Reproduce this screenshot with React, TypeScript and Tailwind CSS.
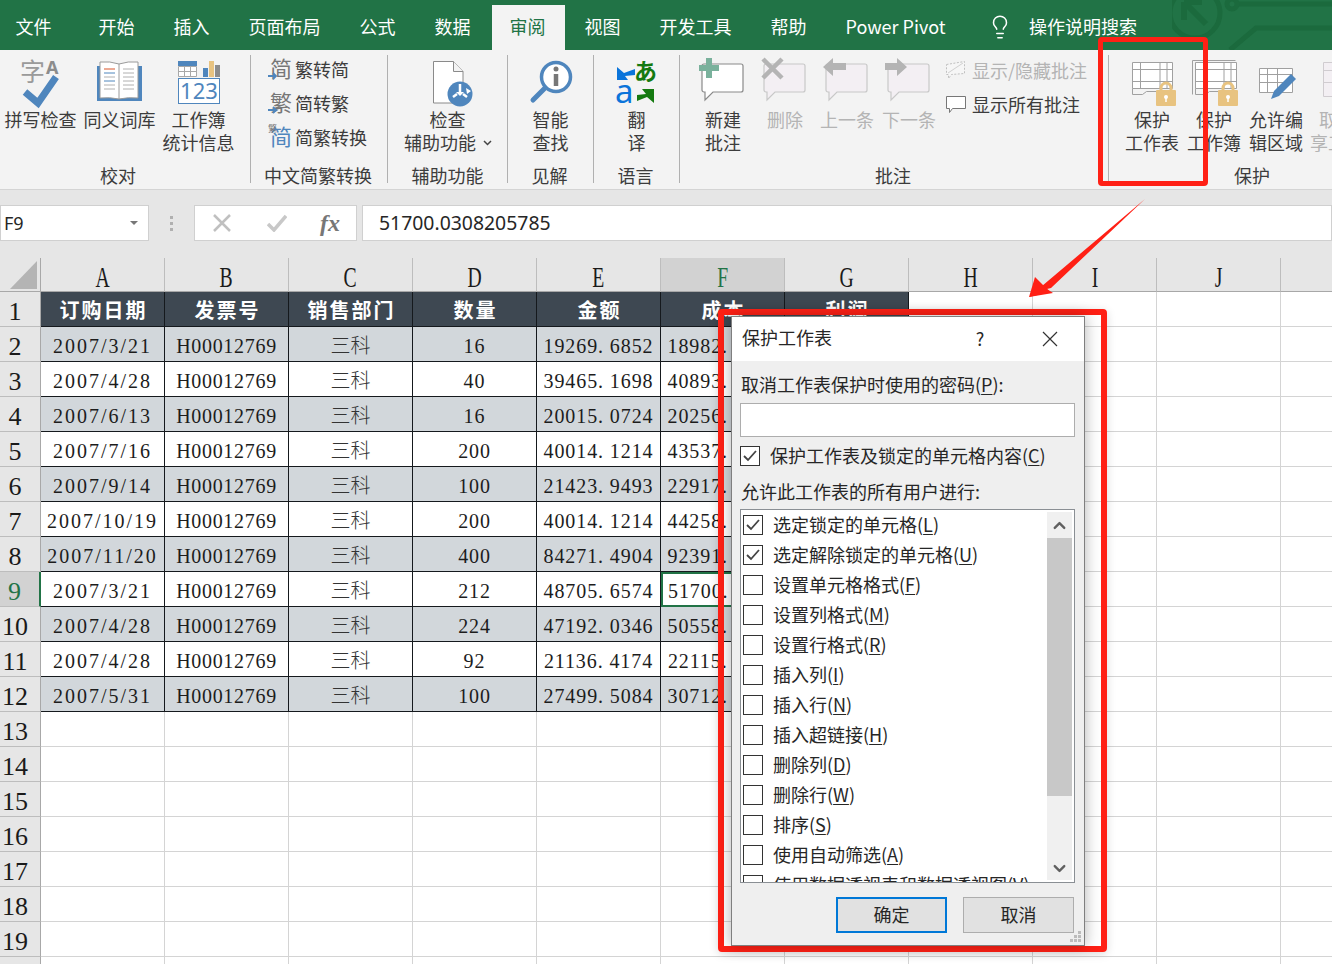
import React from 'react';
import { Lightbulb, ChevronUp, ChevronDown } from 'lucide-react';

const CJK = '[font-family:"Noto_Sans_CJK_SC","Noto_Sans",sans-serif]';

const tabs = ['文件', '开始', '插入', '页面布局', '公式', '数据', '审阅', '视图', '开发工具', '帮助', 'Power Pivot'];

const BLUE = '#4f86bd';

const Bubble = ({ x = 5, disabled = false }: { x?: number; disabled?: boolean }) => (
  <path
    d={`M${x + 2} 9h37a2 2 0 0 1 2 2v24a2 2 0 0 1-2 2h-28l-8 8v-8h-1a2 2 0 0 1-2-2v-24a2 2 0 0 1 2-2z`}
    fill={disabled ? '#f3eff3' : '#fff'}
    stroke={disabled ? '#c8c8c8' : '#8a8a8a'}
    strokeWidth="1.2"
  />
);

const Ico = ({ children }: { children: React.ReactNode }) => (
  <svg width="52" height="53" viewBox="0 0 52 53" className="shrink-0 overflow-visible">
    {children}
  </svg>
);

const SpellIcon = () => (
  <Ico>
    <text x="5" y="26" fontSize="25" fill="#9a9a9a" fontFamily="Noto Sans CJK SC">字</text>
    <text x="31" y="19" fontSize="18" fill="#8c8c8c" fontWeight="700" fontFamily="Noto Sans">A</text>
    <path d="M10 37l13 11 18-26" fill="none" stroke={BLUE} strokeWidth="7" />
  </Ico>
);

const BookIcon = () => (
  <Ico>
    <path d="M3 11h45v35H3z" fill={BLUE} />
    <path d="M6 7q10-1 19 2q9-3 19-2v36q-10-1-19 1q-9-2-19-1z" fill="#fff" stroke="#9a9a9a" />
    <path d="M25 9v35" stroke="#9a9a9a" />
    <path d="M10 14h11" stroke="#d9542b" />
    <path d="M10 18h11M10 26h11" stroke="#4f86bd" />
    <path d="M10 22h11M10 30h11M10 34h11M29 14h11M29 18h11M29 22h11M29 26h11M29 30h11M29 34h11" stroke="#b0b0b0" />
  </Ico>
);

const StatsIcon = () => (
  <Ico>
    <path d="M5 6h19v5H5z" fill={BLUE} />
    <path d="M5.5 11.5h18v10h-18zM5.5 16.5h18M11.5 11.5v10M17.5 11.5v10" fill="#fff" stroke="#a8a8a8" />
    <path d="M30 13h5v9h-5z" fill={BLUE} />
    <path d="M36 6h5v16h-5z" fill="#e8c380" />
    <path d="M42 10h5v12h-5z" fill="#8c8c8c" />
    <rect x="5.5" y="23.5" width="41" height="25" fill="#fff" stroke={BLUE} />
    <text x="26" y="44" textAnchor="middle" fontSize="22" fill={BLUE} fontFamily="Noto Sans">123</text>
  </Ico>
);

const DocIcon = () => (
  <Ico>
    <path d="M11.5 6.500h20l9.500 10v31.500h-29.500z" fill="#fff" stroke="#8a8a8a" />
    <path d="M31.500 6.500v10h9.500" fill="#f3f3f3" stroke="#8a8a8a" />
    <circle cx="38" cy="39" r="12.500" fill={BLUE} />
    <path d="M38 29v9m-7 4l4-3m6 0l4 3" stroke="#fff" strokeWidth="2.500" />
    <path d="M38 41l-4-4h8zM44 33l5 3-4 3z" fill="#fff" />
  </Ico>
);

const LookupIcon = () => (
  <Ico>
    <circle cx="31" cy="22" r="14.500" fill="#fff" stroke={BLUE} strokeWidth="3.500" />
    <path d="M20 33L8 45" stroke={BLUE} strokeWidth="5" strokeLinecap="round" />
    <circle cx="31" cy="14" r="2.500" fill="#777" />
    <path d="M31 19v12" stroke="#777" strokeWidth="4.500" />
  </Ico>
);

const TranslateIcon = () => (
  <Ico>
    <path d="M6 12l7 6 11-4v6l-10 1 3 4H6z" fill="#0a74da" />
    <text x="4" y="48" fontSize="33" fill="#0a74da" fontFamily="Noto Sans">a</text>
    <text x="23" y="25" fontSize="23" fontWeight="700" fill="#157a10" fontFamily="Noto Sans CJK SC">あ</text>
    <path d="M43 34v14l-7-6-10 4v-6l9-1-4-5z" fill="#157a10" />
  </Ico>
);

const NewCommentIcon = () => (
  <Ico>
    <Bubble />
    <path d="M9 3h6v7h7v6h-7v7H9v-7H2v-6h7z" fill="#7ab19c" />
  </Ico>
);

const DeleteIcon = () => (
  <Ico>
    <Bubble disabled />
    <path d="M4 4l19 19M23 4L4 23" stroke="#b4b4b4" strokeWidth="4.500" />
  </Ico>
);

const PrevIcon = () => (
  <Ico>
    <Bubble disabled />
    <path d="M2 12L12 3v5h13v7H12v6z" fill="#b4b4b4" />
  </Ico>
);

const NextIcon = () => (
  <Ico>
    <Bubble disabled />
    <path d="M24 12L14 3v5H2v7h12v6z" fill="#b4b4b4" />
  </Ico>
);

const Lock = ({ x }: { x: number }) => (
  <g>
    <path d={`M${x + 5} 36v-3a5 5 0 0 1 10 0v3`} fill="none" stroke="#e8c380" strokeWidth="3" />
    <rect x={x} y="35" width="20" height="16" rx="1" fill="#e8c380" />
    <circle cx={x + 10} cy="42" r="2" fill="#fff" />
    <path d={`M${x + 10} 42v5`} stroke="#fff" strokeWidth="1.500" />
  </g>
);

const SheetGrid = ({ x, w, stroke = '#a0a0a0' }: { x: number; w: number; stroke?: string }) => (
  <g fill="none" stroke={stroke}>
    <path d={`M${x + 0.5} 7.500h${w}v26h-${w}z`} fill="#fff" />
    <path d={`M${x + 0.5} 14.500h${w}M${x + 0.5} 26.500h${w}M${x + 8.500} 7.500v26M${x + w - 12} 7.500v26M${x + w - 5} 7.500v26`} />
    <path d={`M${x + 0.5} 33.500v6h10l4-3h10`} />
  </g>
);

const ProtectSheetIcon = () => (
  <Ico>
    <SheetGrid x={6} w={40} />
    <Lock x={30} />
  </Ico>
);

const ProtectBookIcon = () => (
  <Ico>
    <path d="M4.500 5.500h43" stroke="#a0a0a0" />
    <path d="M4.500 5.500v34" stroke="#a0a0a0" />
    <SheetGrid x={7} w={41} />
    <Lock x={30} />
  </Ico>
);

const AllowEditIcon = () => (
  <Ico>
    <g fill="#fff" stroke="#a0a0a0">
      <path d="M9.500 13.500h33v24h-33z" />
      <path d="M9.500 19.500h33M9.500 27.500h33M17.500 13.500v24M27.500 13.500v24" fill="none" />
    </g>
    <path d="M21 44l3-8 17-17 5 5-17 17z" fill={BLUE} />
  </Ico>
);

const UnshareIcon = () => (
  <Ico>
    <g fill="#f3eff3" stroke="#d0ccd0">
      <path d="M3.500 7.500h33v34h-33z" />
      <path d="M3.500 15.500h33M3.500 27.500h33M12.500 7.500v34" fill="none" />
    </g>
  </Ico>
);

const BigBtn = ({ icon, lines, w = 'w-[79px]', disabled = false }: { icon: React.ReactNode; lines: React.ReactNode[]; w?: string; disabled?: boolean }) => (
  <div className={`${w} shrink-0 flex flex-col items-center`}>
    {icon}
    <div className={`text-[18px] leading-[23px] text-center whitespace-nowrap ${disabled ? 'text-[#b4b4b4]' : 'text-[#3c3c3c]'}`}>
      {lines.map((l, i) => (
        <div key={i}>{l}</div>
      ))}
    </div>
  </div>
);

const Group = ({ w, label, children, className = '', last = false, labelPad = 'pr-[2px]' }: { w: string; label: string; children: React.ReactNode; className?: string; last?: boolean; labelPad?: string }) => (
  <div className={`${w} shrink-0 h-[128px] flex flex-col ${last ? '' : 'border-r border-[#b0b0b0]'}`}>
    <div className={`h-[110px] flex ${className}`}>{children}</div>
    <div className={`h-[18px] leading-[20px] text-[18px] text-center text-[#3c3c3c] whitespace-nowrap ${labelPad}`}>{label}</div>
  </div>
);

const SmallConv = ({ glyph, label, blue = false, arrow = true }: { glyph: string; label: string; blue?: boolean; arrow?: boolean }) => (
  <div className="h-[34px] flex items-center">
    <svg width="26" height="26" viewBox="0 0 26 26" className="shrink-0 overflow-visible">
      <text x="3" y="21" fontSize="22" fill={blue ? BLUE : '#777'} fontFamily="Noto Sans CJK SC">{glyph}</text>
      {!arrow && <text x="1" y="8" fontSize="9" fill="#777" fontFamily="Noto Sans CJK SC">繁</text>}
      {arrow && <path d="M1 20h8m-3-3l3 3-3 3" fill="none" stroke={BLUE} strokeWidth="1.800" />}
    </svg>
    <span className="ml-[2px] text-[18px] leading-[23px] text-[#3c3c3c] whitespace-nowrap">{label}</span>
  </div>
);

const columns = ['A', 'B', 'C', 'D', 'E', 'F', 'G', 'H', 'I', 'J', '', ''];
const headers = ['订购日期', '发票号', '销售部门', '数量', '金额', '成本', '利润'];
const rows: string[][] = [
  ['2007/3/21', 'H00012769', '三科', '16', '19269. 6852', '18982. 3366'],
  ['2007/4/28', 'H00012769', '三科', '40', '39465. 1698', '40893. 2162'],
  ['2007/6/13', 'H00012769', '三科', '16', '20015. 0724', '20256. 4908'],
  ['2007/7/16', 'H00012769', '三科', '200', '40014. 1214', '43537. 9154'],
  ['2007/9/14', 'H00012769', '三科', '100', '21423. 9493', '22917. 3820'],
  ['2007/10/19', 'H00012769', '三科', '200', '40014. 1214', '44258. 3150'],
  ['2007/11/20', 'H00012769', '三科', '400', '84271. 4904', '92391. 2780'],
  ['2007/3/21', 'H00012769', '三科', '212', '48705. 6574', '51700. 0308'],
  ['2007/4/28', 'H00012769', '三科', '224', '47192. 0346', '50558. 4480'],
  ['2007/4/28', 'H00012769', '三科', '92', '21136. 4174', '22115. 7626'],
  ['2007/5/31', 'H00012769', '三科', '100', '27499. 5084', '30712. 6440'],
];

const rowNums = Array.from({ length: 20 }, (_, i) => i + 1);

const cellText = (c: number) => {
  if (c === 0) return 'tracking-[2px]';
  if (c === 1) return 'tracking-[0.7px]';
  if (c === 2) return 'font-light tracking-[0px] text-[#333]';
  return 'tracking-[0.9px]';
};

const Sheet = () => (
  <div className="grid grid-cols-[41px_repeat(12,124px)] grid-rows-[34px] auto-rows-[35px] [font-family:'Liberation_Serif','Noto_Sans_CJK_SC',serif]">
    <div className="bg-[#e6e6e6] border-r border-b border-[#a8a8a8] relative">
      <div className="absolute left-[10px] top-[3px] w-0 h-0 border-l-[27px] border-l-transparent border-b-[28px] border-b-[#b4b4b4]" />
    </div>
    {columns.map((c, i) => (
      <div
        key={i}
        className={`flex items-center justify-center pt-[4px] border-r border-b border-b-[#a8a8a8] border-r-[#bdbdbd] text-[24px] ${c === 'F' ? 'bg-[#d2d2d2] text-[#217346]' : 'bg-[#e6e6e6] text-[#1a1a1a]'}`}
      >
        <span className="scale-x-[0.82] scale-y-[1.2]">{c}</span>
      </div>
    ))}
    {rowNums.map((n) => {
      const isHead = n === 1;
      const data = rows[n - 2];
      return (
        <React.Fragment key={n}>
          <div
            className={`flex items-center justify-center pr-[10px] pt-[5px] text-[26px] border-b border-b-[#bdbdbd] ${n === 9 ? 'bg-[#d2d2d2] text-[#217346] border-r-2 border-r-[#217346]' : 'bg-[#e6e6e6] text-[#1a1a1a] border-r border-r-[#a8a8a8]'}`}
          >
            {n < 20 ? n : ''}
          </div>
          {columns.map((_, c) => {
            if (c < 7 && isHead) {
              return (
                <div key={c} className="bg-[#3e4852] border-r border-b border-[#15191d] flex items-center justify-center pl-[2px] pt-[3px] text-white font-bold text-[20px] tracking-[2px]">
                  {headers[c]}
                </div>
              );
            }
            if (c < 7 && data) {
              const band = n % 2 === 0 ? 'bg-[#d2d7db]' : 'bg-white';
              const selected = n === 9 && c === 5;
              return (
                <div
                  key={c}
                  className={`${band} ${cellText(c)} overflow-hidden whitespace-nowrap flex items-center justify-center pt-[3px] text-[20px] text-[#1c1c1c] ${selected ? 'border-2 border-[#217346]' : 'border-r border-b border-[#15191d]'}`}
                >
                  {data[c] ?? ''}
                </div>
              );
            }
            return <div key={c} className="bg-white border-r border-b border-[#d4d4d4]" />;
          })}
        </React.Fragment>
      );
    })}
  </div>
);

const Check = ({ checked = false }: { checked?: boolean }) => (
  <span className="w-[20px] h-[20px] shrink-0 border border-[#333] bg-white flex items-center justify-center">
    {checked && (
      <svg width="14" height="12" viewBox="0 0 14 12">
        <path d="M1 6l4 4 8-9" fill="none" stroke="#444" strokeWidth="1.800" />
      </svg>
    )}
  </span>
);

const Mn = ({ text, k, tail = '' }: { text: string; k: string; tail?: string }) => (
  <span className="-translate-y-[1px]">
    {text}(<span className="underline underline-offset-2">{k}</span>){tail}
  </span>
);

const permissions: [string, string, boolean][] = [
  ['选定锁定的单元格', 'L', true],
  ['选定解除锁定的单元格', 'U', true],
  ['设置单元格格式', 'F', false],
  ['设置列格式', 'M', false],
  ['设置行格式', 'R', false],
  ['插入列', 'I', false],
  ['插入行', 'N', false],
  ['插入超链接', 'H', false],
  ['删除列', 'D', false],
  ['删除行', 'W', false],
  ['排序', 'S', false],
  ['使用自动筛选', 'A', false],
  ['使用数据透视表和数据透视图', 'V', false],
];

const Dialog = () => (
  <div className="absolute left-[731px] top-[316px] w-[354px] h-[630px] border border-[#7f7f7f] bg-[#efefef] flex flex-col text-[18px] text-[#262626] shadow-[0_0_14px_rgba(0,0,0,0.3)]">
    <div className="h-[44px] shrink-0 bg-white flex items-center pl-[10px]">
      <span className="leading-[23px] -translate-y-[2px]">保护工作表</span>
      <span className="ml-[143px] w-[10px] text-center -translate-y-[1px]">?</span>
      <svg width="18" height="18" viewBox="0 0 18 18" className="ml-[56px]">
        <path d="M2 2l14 14M16 2L2 16" stroke="#333" strokeWidth="1.200" />
      </svg>
    </div>
    <div className="flex-1 min-h-0 flex flex-col pl-[8px] pr-[9px]">
      <div className="mt-[12px] h-[23px] leading-[23px] pl-[1px] whitespace-nowrap">
        <Mn text="取消工作表保护时使用的密码" k="P" tail=":" />
      </div>
      <div className="mt-[7px] h-[34px] shrink-0 bg-white border border-[#adadad]" />
      <div className="mt-[9px] h-[20px] flex items-center gap-[10px] whitespace-nowrap">
        <Check checked />
        <Mn text="保护工作表及锁定的单元格内容" k="C" />
      </div>
      <div className="mt-[14px] h-[23px] leading-[23px] pl-[1px] whitespace-nowrap">允许此工作表的所有用户进行:</div>
      <div className="mt-[6px] h-[374px] shrink-0 bg-white border border-[#8a8f94] flex overflow-hidden">
        <div className="flex-1 min-w-0 overflow-hidden pl-[2px]">
          {permissions.map(([t, k, on]) => (
            <div key={k} className="h-[30px] flex items-center gap-[10px] whitespace-nowrap">
              <Check checked={on} />
              <Mn text={t} k={k} />
            </div>
          ))}
        </div>
        <div className="w-[25px] my-[2px] mr-[2px] shrink-0 bg-[#f0f0f0] flex flex-col">
          <div className="h-[26px] shrink-0 flex items-center justify-center">
            <ChevronUp size={19} strokeWidth={3} color="#606060" />
          </div>
          <div className="h-[258px] shrink-0 bg-[#c8c8c8]" />
          <div className="flex-1 flex items-end justify-center pb-[2px]">
            <ChevronDown size={19} strokeWidth={3} color="#606060" />
          </div>
        </div>
      </div>
      <div className="mt-[14px] flex justify-end gap-[16px] pr-[1px]">
        <button className="w-[111px] h-[36px] pb-[2px] bg-[#e1e1e1] border-2 border-[#0078d7] text-[18px] leading-[23px] text-[#262626]">确定</button>
        <button className="w-[111px] h-[36px] pb-[2px] bg-[#e1e1e1] border border-[#adadad] text-[18px] leading-[23px] text-[#262626]">取消</button>
      </div>
    </div>
    <svg width="14" height="14" viewBox="0 0 14 14" className="absolute right-[1px] bottom-[1px]">
      <path d="M9 1h3v3H9zM5 5h3v3H5zM9 5h3v3H9zM1 9h3v3H1zM5 9h3v3H5zM9 9h3v3H9z" fill="#bcbcbc" />
    </svg>
  </div>
);

const tabClass = (t: string) => {
  if (t === '审阅') return 'ml-[1.500px] pl-[18px] pr-[19.500px] bg-[#f3f3f3] text-[#217346]';
  if (t === '文件') return 'pl-[19.500px] pr-[27.500px] text-white';
  return 'px-[19.500px] text-white';
};

export default function App() {
  return (
    <div className={`relative w-[1332px] h-[964px] overflow-hidden bg-[#e6e6e6] ${CJK}`}>
      {/* tabs */}
      <div className="relative h-[50px] bg-[#217346] overflow-hidden flex items-end">
        <svg width="160" height="50" viewBox="0 0 160 50" className="absolute right-0 top-0" fill="none" stroke="#1b6a3d" strokeWidth="5">
          <circle cx="23" cy="13" r="25" />
          <path d="M12 2h18M12 2v18M12 2l22 22" strokeWidth="6" />
          <path d="M58 50l26-22h76M65 4h95" />
          <circle cx="60" cy="4" r="5" />
        </svg>
        <div className="relative flex -ml-[4px]">
          {tabs.map((t) => (
            <div key={t} className={`h-[45px] pb-[2px] flex items-center text-[18px] leading-[23px] whitespace-nowrap ${tabClass(t)}`}>
              {t}
            </div>
          ))}
          <div className="h-[45px] pb-[2px] ml-[22px] flex items-center text-white text-[18px] leading-[23px] whitespace-nowrap">
            <Lightbulb size={26} strokeWidth={1.4} />
            <span className="ml-[16px]">操作说明搜索</span>
          </div>
        </div>
      </div>

      {/* ribbon */}
      <div className="h-[140px] bg-[#f3f3f3] border-b border-[#d4d4d4] flex pt-[5px]">
        <Group w="w-[251px]" label="校对" className="pl-[1px]" labelPad="pr-[14px]">
          <BigBtn icon={<SpellIcon />} lines={['拼写检查']} />
          <BigBtn icon={<BookIcon />} lines={['同义词库']} />
          <BigBtn icon={<StatsIcon />} lines={['工作簿', '统计信息']} />
        </Group>
        <Group w="w-[137px]" label="中文简繁转换" className="pl-[16px]">
          <div className="flex flex-col -mt-[3px]">
            <SmallConv glyph="简" label="繁转简" />
            <SmallConv glyph="繁" label="简转繁" />
            <SmallConv glyph="简" label="简繁转换" blue arrow={false} />
          </div>
        </Group>
        <Group w="w-[120px]" label="辅助功能" className="justify-center" labelPad="">
          <BigBtn
            w="w-[100px]"
            icon={<DocIcon />}
            lines={[
              '检查',
              <span key="a" className="inline-flex items-center gap-[7px] pl-[1px]">
                辅助功能
                <svg width="9" height="6" viewBox="0 0 9 6" className="shrink-0">
                  <path d="M1 1l3.500 3.500L8 1" fill="none" stroke="#444" strokeWidth="1.500" />
                </svg>
              </span>,
            ]}
          />
        </Group>
        <Group w="w-[86px]" label="见解" className="justify-center">
          <BigBtn w="w-[70px]" icon={<LookupIcon />} lines={['智能', '查找']} />
        </Group>
        <Group w="w-[86px]" label="语言" className="justify-center">
          <BigBtn w="w-[70px]" icon={<TranslateIcon />} lines={['翻', '译']} />
        </Group>
        <Group w="w-[429px]" label="批注" className="pl-[12px]">
          <BigBtn w="w-[62px]" icon={<NewCommentIcon />} lines={['新建', '批注']} />
          <BigBtn w="w-[62px]" icon={<DeleteIcon />} lines={['删除']} disabled />
          <BigBtn w="w-[62px]" icon={<PrevIcon />} lines={['上一条']} disabled />
          <BigBtn w="w-[62px]" icon={<NextIcon />} lines={['下一条']} disabled />
          <div className="ml-[5px] -mt-[1px] flex flex-col">
            <div className="h-[32px] flex items-center gap-[5px] text-[18px] text-[#b4b4b4] whitespace-nowrap">
              <svg width="22" height="20" viewBox="0 0 22 20" className="shrink-0">
                <path d="M1.500 4.500l18-3v12l-13 1-3 4v-4h-2z" fill="#f6f6f6" stroke="#c0c0c0" strokeDasharray="2 1.500" />
                <path d="M3 13l15-10" stroke="#d0d0d0" />
              </svg>
              显示/隐藏批注
            </div>
            <div className="h-[36px] flex items-center gap-[5px] text-[18px] text-[#3c3c3c] whitespace-nowrap">
              <svg width="22" height="20" viewBox="0 0 22 20" className="shrink-0">
                <path d="M1.500 2.500h19v12h-13l-3 4v-4h-3z" fill="#fff" stroke="#777" />
              </svg>
              显示所有批注
            </div>
          </div>
        </Group>
        <Group w="w-[286px]" label="保护" className="pl-[12px]" last labelPad="">
          <BigBtn w="w-[62px]" icon={<ProtectSheetIcon />} lines={['保护', '工作表']} />
          <BigBtn w="w-[62px]" icon={<ProtectBookIcon />} lines={['保护', '工作簿']} />
          <BigBtn w="w-[62px]" icon={<AllowEditIcon />} lines={['允许编', '辑区域']} />
          <BigBtn w="w-[78px]" icon={<UnshareIcon />} lines={['取消共', '享工作簿']} disabled />
        </Group>
      </div>

      {/* formula bar */}
      <div className="h-[68px] pt-[15px] flex items-start">
        <div className="w-[149px] h-[36px] bg-white border border-[#d0d0d0] flex items-center justify-between pl-[3px] pr-[10px] text-[18px] text-[#262626] [font-family:'Noto_Sans',sans-serif]">
          F9
          <span className="w-0 h-0 border-x-[4px] border-x-transparent border-t-[4px] border-t-[#777]" />
        </div>
        <div className="w-[45px] h-[36px] flex flex-col items-center justify-center gap-[3px]">
          <span className="w-[3px] h-[3px] bg-[#b0b0b0]" />
          <span className="w-[3px] h-[3px] bg-[#b0b0b0]" />
          <span className="w-[3px] h-[3px] bg-[#b0b0b0]" />
        </div>
        <div className="w-[163px] h-[36px] bg-white border border-[#d0d0d0] flex items-center">
          <svg width="18" height="18" viewBox="0 0 18 18" className="ml-[18px]">
            <path d="M1 1l16 16M17 1L1 17" stroke="#c0c0c0" strokeWidth="2.500" />
          </svg>
          <svg width="20" height="18" viewBox="0 0 20 18" className="ml-[36px]">
            <path d="M1 10l6 6L19 2" fill="none" stroke="#c8c8c8" strokeWidth="3.500" />
          </svg>
          <span className="ml-[33px] text-[24px] font-bold italic text-[#777] [font-family:'Liberation_Serif',serif]">fx</span>
        </div>
        <div className="ml-[5px] flex-1 h-[36px] bg-white border border-[#d0d0d0] flex items-center pl-[16px] text-[19.400px] text-[#262626] [font-family:'Noto_Sans',sans-serif]">
          51700.0308205785
        </div>
      </div>

      <Sheet />

      {/* red callouts */}
      <div className="absolute left-[1098px] top-[37px] w-[110px] h-[149px] border-[5px] border-[#ff2015] rounded-[4px]" />
      <div className="absolute left-[718px] top-[309px] w-[389px] h-[643px] border-[6px] border-[#ff2015] rounded-[4px] shadow-[0_2px_10px_rgba(0,0,0,0.15)]" />
      <Dialog />
      <svg width="130" height="110" viewBox="0 0 130 110" className="absolute left-[1025px] top-[195px]">
        <path d="M120 4L4 102l24-4-6-4 4-1z" fill="#ff2015" />
        <path d="M4 102l6-20 15 15z" fill="#ff2015" />
      </svg>
    </div>
  );
}
